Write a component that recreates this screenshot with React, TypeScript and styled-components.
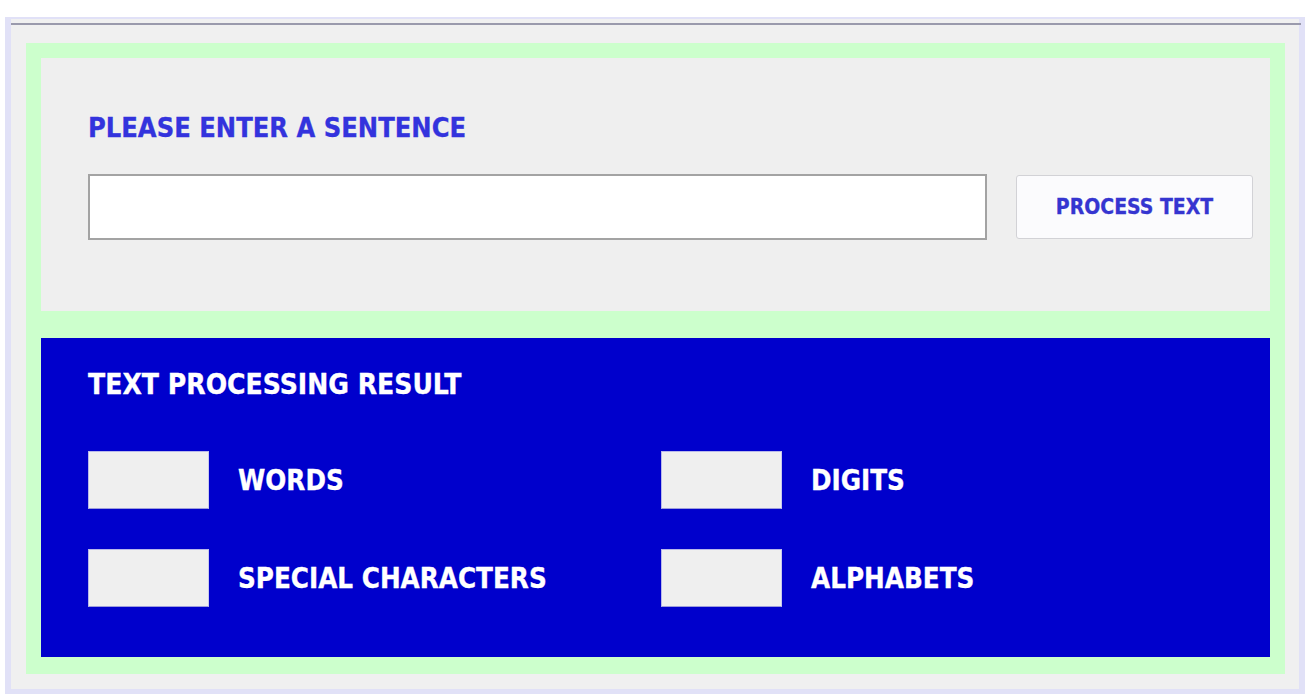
import React from "react";
import styled, { createGlobalStyle } from "styled-components";

const Global = createGlobalStyle`
  html, body {
    margin: 0;
    padding: 0;
    background: #ffffff;
  }
  body {
    font-family: "DejaVu Sans Condensed", "DejaVu Sans", Tahoma, sans-serif;
    font-stretch: condensed;
  }
`;

const Frame = styled.div`
  box-sizing: border-box;
  width: 1300px;
  margin: 17px 0 0 5px;
  background: #f0f0f0;
  border: 6px solid #e1e1f7;
  border-top-width: 2px;
  border-bottom-width: 5px;
  padding: 4px 0 15px;
`;

const Rule = styled.div`
  height: 2px;
  background: #9a9aac;
  margin-right: -2px;
`;

const GreenPanel = styled.div`
  margin: 18px 14px 0 15px;
  background: #ccffcc;
  padding: 15px 15px 17px;
  display: flex;
  flex-direction: column;
  gap: 27px;
`;

const InputSection = styled.section`
  background: #efefef;
  padding: 54px 17px 71px 47px;
  display: flex;
  flex-direction: column;
  gap: 30px;
`;

const Heading = styled.h2<{ $color: string; $size: number }>`
  margin: 0;
  font-size: ${(p) => p.$size}px;
  line-height: 32px;
  font-weight: 700;
  color: ${(p) => p.$color};
  -webkit-text-stroke: 0.3px ${(p) => p.$color};
`;

const InputRow = styled.div`
  display: flex;
  align-items: center;
  gap: 29px;
`;

const TextInput = styled.input`
  box-sizing: border-box;
  width: 899px;
  height: 66px;
  border: 2px solid #a3a3a3;
  background: #ffffff;
  margin: 0;
  padding: 0 10px;
  font-size: 20px;
  outline: none;
`;

const ProcessButton = styled.button`
  box-sizing: border-box;
  width: 237px;
  height: 64px;
  background: #fbfbfd;
  border: 1px solid #d2d2d6;
  border-radius: 3px;
  color: #3535d0;
  font-family: "DejaVu Sans Condensed", "DejaVu Sans", Tahoma, sans-serif;
  font-stretch: condensed;
  font-weight: 700;
  font-size: 21px;
  -webkit-text-stroke: 0.3px #3535d0;
  padding: 0;
  cursor: pointer;
`;

const ResultSection = styled.section`
  background: #0000cc;
  padding: 31px 17px 50px 47px;
  display: flex;
  flex-direction: column;
  gap: 50px;
`;

const ResultGrid = styled.div`
  display: grid;
  grid-template-columns: 573px 1fr;
  row-gap: 40px;
`;

const ResultItem = styled.div`
  display: flex;
  align-items: center;
  gap: 29px;
`;

const CountBox = styled.div`
  box-sizing: border-box;
  width: 121px;
  height: 58px;
  background: #efefef;
  border: 1px solid #b8b8ea;
  border-bottom-color: #9d9ddc;
  border-right-color: #c8c8ee;
`;

const Label = styled.span`
  font-size: 27.5px;
  line-height: 32px;
  font-weight: 700;
  color: #ffffff;
  -webkit-text-stroke: 0.3px #ffffff;
`;

const results = ["WORDS", "DIGITS", "SPECIAL CHARACTERS", "ALPHABETS"];

export default function App() {
  return (
    <>
      <Global />
      <Frame>
        <Rule />
        <GreenPanel>
          <InputSection>
            <Heading $color="#3333dd" $size={27}>
              PLEASE ENTER A SENTENCE
            </Heading>
            <InputRow>
              <TextInput type="text" />
              <ProcessButton>PROCESS TEXT</ProcessButton>
            </InputRow>
          </InputSection>
          <ResultSection>
            <Heading $color="#ffffff" $size={28}>
              TEXT PROCESSING RESULT
            </Heading>
            <ResultGrid>
              {results.map((r) => (
                <ResultItem key={r}>
                  <CountBox />
                  <Label>{r}</Label>
                </ResultItem>
              ))}
            </ResultGrid>
          </ResultSection>
        </GreenPanel>
      </Frame>
    </>
  );
}
